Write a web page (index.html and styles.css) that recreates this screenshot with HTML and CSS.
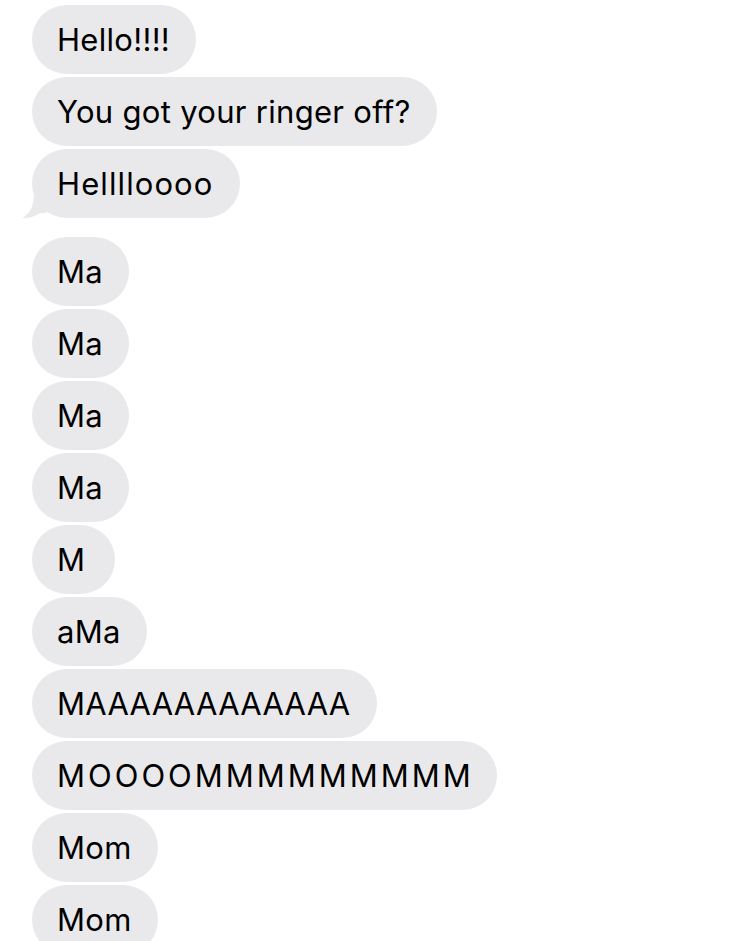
FILE: index.html
```html
<!DOCTYPE html>
<html>
<head>
<meta charset="utf-8">
<link rel="stylesheet" href="styles.css">
</head>
<body>
<div class="thread">
  <div class="group">
    <div class="bubble">Hello!!!!</div>
    <div class="bubble">You got your ringer off?</div>
    <div class="bubble loose">Helllloooo<svg class="tail" width="26" height="26" viewBox="0 0 26 26"><path d="M14 0 C14 13 10 21 2 25 C9 25.5 15 23.5 20 20 L26 20 L26 0 Z" fill="#e9e9eb"/></svg></div>
  </div>
  <div class="group">
    <div class="bubble">Ma</div>
    <div class="bubble">Ma</div>
    <div class="bubble">Ma</div>
    <div class="bubble">Ma</div>
    <div class="bubble">M</div>
    <div class="bubble">aMa</div>
    <div class="bubble">MAAAAAAAAAAAA</div>
    <div class="bubble wide">MOOOOMMMMMMMMM</div>
    <div class="bubble">Mom</div>
    <div class="bubble">Mom</div>
  </div>
</div>
</body>
</html>
```
FILE: styles.css
```css
html, body {
  margin: 0;
  padding: 0;
  background: #ffffff;
  height: 941px;
  overflow: hidden;
}
.thread {
  display: flex;
  flex-direction: column;
  gap: 19px;
  padding: 5px 0 0 32px;
  font-family: Inter, "Liberation Sans", Arial, sans-serif;
}
.group {
  display: flex;
  flex-direction: column;
  align-items: flex-start;
  gap: 3px;
}
.bubble {
  position: relative;
  background: #e9e9eb;
  color: #000;
  font-size: 31px;
  letter-spacing: 0.3px;
  line-height: 69px;
  height: 69px;
  min-width: 83px;
  padding: 0 26px 0 25px;
  border-radius: 35px;
  box-sizing: border-box;
  white-space: nowrap;
}
.wide {
  letter-spacing: 3px;
  padding-right: 23px;
}
.loose {
  letter-spacing: 1.1px;
}
.tail {
  position: absolute;
  left: -12px;
  bottom: -1px;
  display: block;
}
```
